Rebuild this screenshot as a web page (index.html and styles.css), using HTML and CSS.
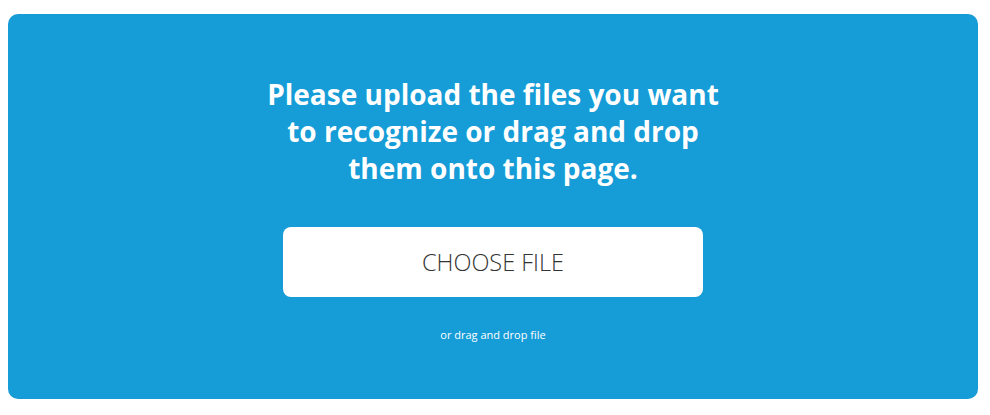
FILE: index.html
```html
<!DOCTYPE html>
<html lang="en">
<head>
<meta charset="utf-8">
<title>Upload</title>
<link rel="stylesheet" href="styles.css">
</head>
<body>
<main class="page">
  <section class="dropzone">
    <h1 class="title">Please upload the files you want to recognize or drag and drop them onto this page.</h1>
    <button class="choose" type="button">CHOOSE FILE</button>
    <p class="hint">or drag and drop file</p>
  </section>
</main>
</body>
</html>
```
FILE: styles.css
```css
html, body {
  margin: 0;
  padding: 0;
  background: #ffffff;
}
.page {
  padding: 14px 12px 16px 8px;
}
.dropzone {
  box-sizing: border-box;
  height: 385px;
  background: #169cd7;
  border-radius: 10px;
  display: flex;
  flex-direction: column;
  align-items: center;
  padding-top: 62px;
  font-family: "Open Sans", "Noto Sans", sans-serif;
}
.title {
  margin: 0;
  max-width: 480px;
  color: #ffffff;
  font-size: 28px;
  line-height: 37px;
  font-weight: 700;
  text-align: center;
}
.choose {
  margin-top: 40px;
  width: 420px;
  height: 70px;
  border: none;
  border-radius: 8px;
  background: #ffffff;
  color: #333333;
  font-family: "Open Sans", "Noto Sans", sans-serif;
  font-size: 23.5px;
  font-weight: 300;
  letter-spacing: 0;
  cursor: pointer;
}
.hint {
  margin: 30px 0 0;
  color: #ffffff;
  font-size: 11px;
  line-height: 16px;
}
```
